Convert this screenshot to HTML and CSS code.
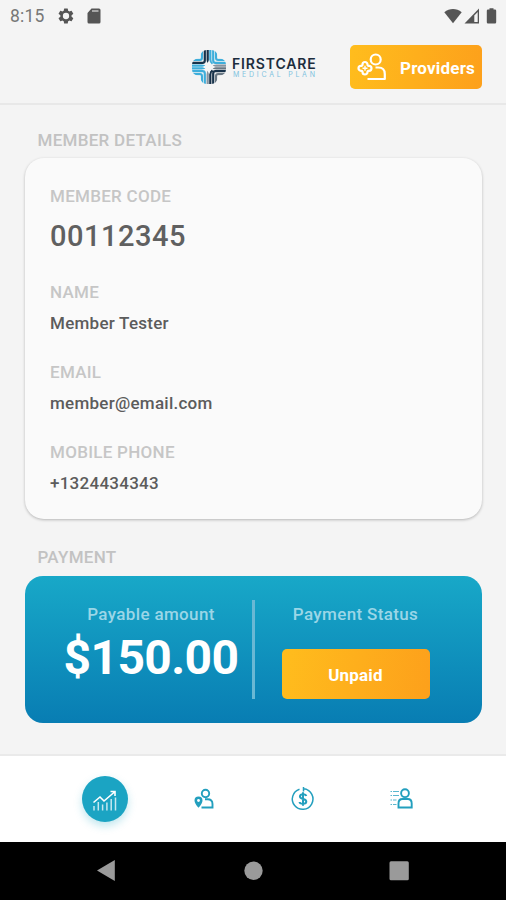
FILE: index.html
```html
<!DOCTYPE html>
<html lang="en">
<head>
<meta charset="utf-8">
<title>FirstCare Medical Plan</title>
<link rel="stylesheet" href="styles.css">
</head>
<body>
<div class="screen">
  <div class="status-bar">
    <span class="clock">8:15</span>
    <svg class="gear" width="18" height="18" viewBox="0 0 24 24"><path fill="#555" fill-rule="evenodd" d="M19.4 13a7.500 7.500 0 0 0 0-2l2.100-1.600a.5.5 0 0 0 .1-.6l-2-3.500a.5.5 0 0 0-.6-.2l-2.500 1a7.300 7.300 0 0 0-1.700-1L14.400 2.400a.5.5 0 0 0-.5-.4h-4a.5.5 0 0 0-.5.400L9 5.100a7.700 7.700 0 0 0-1.700 1l-2.500-1a.5.5 0 0 0-.6.200l-2 3.500a.5.5 0 0 0 .1.600L4.500 11a8 8 0 0 0 0 2l-2.200 1.600a.5.5 0 0 0-.1.600l2 3.500c.1.200.4.300.6.200l2.500-1a7.300 7.300 0 0 0 1.700 1l.4 2.700c0 .2.200.4.500.4h4c.2 0 .5-.2.500-.4l.4-2.700a7.700 7.700 0 0 0 1.700-1l2.500 1c.2.100.5 0 .6-.2l2-3.500a.5.500 0 0 0-.1-.6zM12 16.200a4.200 4.200 0 1 1 0-8.400 4.200 4.200 0 0 1 0 8.400z"/></svg>
    <svg class="sd" width="14" height="16" viewBox="0 0 14 16"><path fill="#555" d="M4.500.5H12a1.500 1.500 0 0 1 1.500 1.500v12a1.500 1.500 0 0 1-1.500 1.500H2A1.500 1.500 0 0 1 .5 14V5z"/><path stroke="#bbb" stroke-width="1.600" d="M5 3h6.500"/></svg>
    <svg class="signals" width="54" height="16" viewBox="0 0 54 16"><path fill="#555" d="M.3 4.200C5.500-.2 12.500-.2 17.700 4.200L9 15.300z"/><path fill="#555" d="M20.500 15.500 35 .5v15z"/><path fill="#f4f4f4" d="M30.300 7.500 33.700 4v10h-3.400z"/><path fill="#555" d="M45.500 1.500V.3h4v1.200H51a1.200 1.200 0 0 1 1.200 1.200v11.500a1.200 1.200 0 0 1-1.200 1.200h-7a1.200 1.200 0 0 1-1.200-1.200V2.700A1.200 1.200 0 0 1 44 1.500z"/></svg>
  </div>

  <header class="header">
    <div class="brand">
      <svg width="34" height="34" viewBox="0 0 34 34" fill="none" stroke-width="2.200">
        <clipPath id="cross"><rect x="8.500" y="0" width="17" height="34" rx="6"/><rect x="0" y="8.500" width="34" height="17" rx="6"/></clipPath>
        <g clip-path="url(#cross)">
          <g stroke="#17324a"><path d="M15.700 0v10q0 2 1.300 3M12.800 0v10.500q0 2.300-2.300 2.300H0"/></g>
          <g stroke="#3eaedb"><path d="M9.900 0V8q0 1.900-2 1.900H0M0 15.700h9.500q3 0 4.500 1.300"/></g>
          <g stroke="#3eaedb"><path d="M18.300 0v9.500q0 3 2 4.500M21.200 0v10.500q0 2.300 2.300 2.300H34M24.100 0V8q0 1.900 2 1.900H34"/></g>
          <path stroke="#8794a0" d="M34 15.700h-9.500q-3 0-4.500 1.300"/>
          <g stroke="#3eaedb"><path d="M0 18.300h9.500q3 0 4.500-1.300M0 21.200h10.500q2.300 0 2.300 2.300V34M0 24.100H8q1.900 0 1.900 2V34"/></g>
          <path stroke="#8794a0" d="M15.700 34v-9.500q0-3 1.300-4.500"/>
          <g stroke="#17324a"><path d="M18.300 34v-9.500q0-3 2-4.500M21.200 34V23.500q0-2.300 2.300-2.300H34"/></g>
          <path stroke="#687783" d="M24.100 34v-7.900q0-2 2-2H34M34 18.300h-9.500q-3 0-4.500-1.300"/>
          <path fill="#f4f4f4" d="M17 10q1.800 5.200 7 7-5.200 1.800-7 7-1.800-5.200-7-7 5.200-1.800 7-7z"/>
        </g>
      </svg>
      <div class="brand-text">
        <span class="brand-name">FIRSTCARE</span>
        <span class="brand-sub">MEDICAL PLAN</span>
      </div>
    </div>
    <button class="btn providers">
      <svg width="30" height="28" viewBox="0 0 30 28" fill="none" stroke="#fff" stroke-width="2.200" stroke-linejoin="round"><circle cx="18.700" cy="6.500" r="5"/><path d="M10.500 26h17.300v-5q0-6.500-6.500-6.500h-2.800"/><path d="M5.500 12v-.5a2.500 2.500 0 0 1 5 0v.5l.7.800h.8a2.500 2.500 0 0 1 0 5h-.8l-.7.700v.5a2.500 2.500 0 0 1-5 0v-.5l-.7-.7H4a2.500 2.500 0 0 1 0-5h.8z"/><path stroke-width="1.400" d="M8 12.800v5M5.500 15.300h5"/></svg>
      <span>Providers</span>
    </button>
  </header>

  <main class="content">
    <h2 class="section-title details-title">MEMBER DETAILS</h2>
    <section class="card">
      <div class="label">MEMBER CODE</div>
      <div class="code">00112345</div>
      <div class="label">NAME</div>
      <div class="value">Member Tester</div>
      <div class="label">EMAIL</div>
      <div class="value">member@email.com</div>
      <div class="label">MOBILE PHONE</div>
      <div class="value">+1324434343</div>
    </section>
    <h2 class="section-title payment-title">PAYMENT</h2>
    <section class="payment">
      <div class="amount-col">
        <div class="pay-label">Payable amount</div>
        <div class="amount">$150.00</div>
      </div>
      <div class="divider"></div>
      <div class="status-col">
        <div class="pay-label">Payment Status</div>
        <button class="btn unpaid">Unpaid</button>
      </div>
    </section>
  </main>

  <nav class="tabs">
    <div class="tab active">
      <svg width="28" height="24" viewBox="0 0 28 24" fill="none" stroke="#fff"><path stroke-width="1.600" d="M2.500 13.500 9 8l4 4L23.500 3M19.500 2.500H24V7"/><path stroke-width="1.500" stroke-opacity=".75" d="M3 21.500v-4.500M7.300 21.500V13M11.600 21.500v-6M15.900 21.500v-8M20.200 21.500V10M24.500 21.500V8.500"/></svg>
    </div>
    <div class="tab">
      <svg width="24" height="24" viewBox="0 0 24 24" fill="none" stroke="#239fbe" stroke-width="1.900"><circle cx="13.500" cy="6.500" r="3.700"/><path d="M9.500 20.500H20.500v-3.500q0-4.700-5-4.700h-2.500"/><path fill="#239fbe" stroke="none" d="M6.500 9.500a4 4 0 0 1 4 4q0 3-4 7.300-4-4.300-4-7.300a4 4 0 0 1 4-4z"/><circle cx="6.500" cy="13.500" r="1.400" fill="#fff" stroke="none"/></svg>
    </div>
    <div class="tab">
      <svg width="26" height="26" viewBox="0 0 26 26" fill="none" stroke="#239fbe" stroke-width="1.500"><path d="M9.500 3.200A10.300 10.300 0 1 0 14 2.800M13.500 1v4.500M13.500 2.800l3 .5"/><path stroke-width="2" d="M16.300 10q-.5-1.800-3.300-1.800T9.900 10.300q0 1.900 3.100 2.600 3.300.7 3.300 2.700 0 2.200-3.300 2.200T9.600 16M13 6.200v13.600"/></svg>
    </div>
    <div class="tab">
      <svg width="26" height="24" viewBox="0 0 26 24" fill="none" stroke="#239fbe" stroke-width="1.900"><circle cx="16" cy="6.200" r="3.900"/><path d="M9.500 20.500H22.700v-4q0-4.500-4-4.500h-5.200q-4 0-4 4.500z"/><path stroke-width="1.200" stroke-opacity=".75" d="M1.500 4.500h1.500M4 4.500h6M1.500 8.500h1.500M4 8.500h6M1.500 13h1.500M4 13h3.500M1.500 17.500h1.500M4 17.500h3.500"/></svg>
    </div>
  </nav>

  <div class="system-nav">
    <svg width="506" height="58" viewBox="0 0 506 58" fill="#9a9a9a"><path d="M97 28.500 114.800 18v21z"/><circle cx="253.500" cy="28.700" r="9.200"/><rect x="389.500" y="19.200" width="19.300" height="19" rx="1.500"/></svg>
  </div>
</div>
</body>
</html>
```
FILE: styles.css
```css
* {
  box-sizing: border-box;
}

body {
  margin: 0;
  font-family: Roboto, "Liberation Sans", sans-serif;
  background: #f4f4f4;
}

h2 {
  margin: 0;
}

svg {
  display: block;
  flex: none;
}

.screen {
  width: 506px;
  height: 900px;
  display: flex;
  flex-direction: column;
  overflow: hidden;
}

.status-bar {
  height: 32px;
  display: flex;
  align-items: center;
  padding: 0 8px 0 10px;
}

.clock {
  width: 47px;
  font-size: 17.500px;
  letter-spacing: 0.2px;
  line-height: 32px;
  color: #777;
}

.gear {
  margin-right: 12px;
}

.signals {
  margin-left: auto;
}

.header {
  height: 73px;
  display: flex;
  justify-content: space-between;
  align-items: flex-start;
  padding: 13px 24px 0 192px;
  border-bottom: 2px solid #e8e8e8;
}

.brand {
  display: flex;
  gap: 6px;
  padding-top: 5px;
}

.brand-text {
  display: flex;
  flex-direction: column;
  padding-top: 6px;
  white-space: nowrap;
}

.brand-name {
  font-family: Inter, sans-serif;
  font-weight: 600;
  font-size: 14px;
  line-height: 15px;
  letter-spacing: 0.850px;
  color: #1c2d3d;
}

.brand-sub {
  font-family: Inter, sans-serif;
  font-size: 7px;
  line-height: 7px;
  letter-spacing: 2.750px;
  padding-left: 1px;
  color: #7fc3df;
}

.btn {
  border: 0;
  padding: 0;
  border-radius: 5px;
  display: flex;
  align-items: center;
  font: 700 17px/20px Roboto, sans-serif;
  letter-spacing: 0.2px;
  color: #fff;
  background: linear-gradient(100deg, #ffbd1d, #fda01b);
}

.providers {
  width: 132px;
  height: 44px;
  padding-left: 7px;
  gap: 13px;
}

.providers span {
  padding-top: 1px;
}

.content {
  height: 649px;
  padding: 25px 24px 0 25px;
}

.section-title {
  font-size: 17px;
  line-height: 20px;
  font-weight: 500;
  letter-spacing: 0.28px;
  color: #c2c2c2;
  padding-left: 12.500px;
}

.details-title {
  margin-bottom: 8px;
}

.card {
  height: 361px;
  padding: 28px 25px 0;
  border-radius: 19px;
  background: #fafafa;
  box-shadow: 0 1px 3px rgba(0, 0, 0, 0.26);
}

.label {
  font-size: 17px;
  line-height: 20px;
  font-weight: 500;
  letter-spacing: 0.28px;
  color: #c6c6c6;
}

.code {
  margin: 12px 0 28px;
  font-size: 29px;
  line-height: 36px;
  font-weight: 500;
  letter-spacing: 0.5px;
  color: #606060;
}

.value {
  margin: 11px 0 29px;
  font-size: 17px;
  line-height: 20px;
  font-weight: 500;
  letter-spacing: 0.26px;
  color: #5c5c5c;
}

.payment-title {
  margin: 28px 0 9px;
}

.payment {
  height: 147px;
  border-radius: 18px;
  background: linear-gradient(#18a8c8, #087db3);
  display: flex;
}

.amount-col {
  width: 227px;
  padding: 28px 0 0 25px;
  text-align: center;
}

.pay-label {
  font-size: 17px;
  line-height: 20px;
  font-weight: 500;
  letter-spacing: 0.35px;
  color: #9bd6e7;
}

.amount {
  margin-top: 5px;
  font-size: 48px;
  line-height: 58px;
  font-weight: 700;
  letter-spacing: -0.6px;
  color: #fff;
  white-space: nowrap;
}

.divider {
  width: 3px;
  height: 99px;
  margin-top: 24px;
  background: #69b8d4;
}

.status-col {
  width: 148px;
  margin-left: 26.500px;
  padding-top: 28px;
  text-align: center;
}

.unpaid {
  width: 148px;
  height: 50px;
  margin-top: 25px;
  padding-top: 1px;
  justify-content: center;
}

.tabs {
  height: 88px;
  display: grid;
  grid-template-columns: repeat(4, 99px);
  justify-content: center;
  align-items: center;
  background: #fff;
  border-top: 2px solid #eaeaea;
}

.tab {
  display: flex;
  justify-content: center;
}

.active {
  width: 46px;
  height: 46px;
  margin: 0 auto;
  padding-top: 4px;
  align-items: center;
  border-radius: 50%;
  background: #1ba4c3;
  box-shadow: 0 4px 8px rgba(27, 164, 195, 0.28);
}

.system-nav {
  height: 58px;
  background: #000;
}
```
